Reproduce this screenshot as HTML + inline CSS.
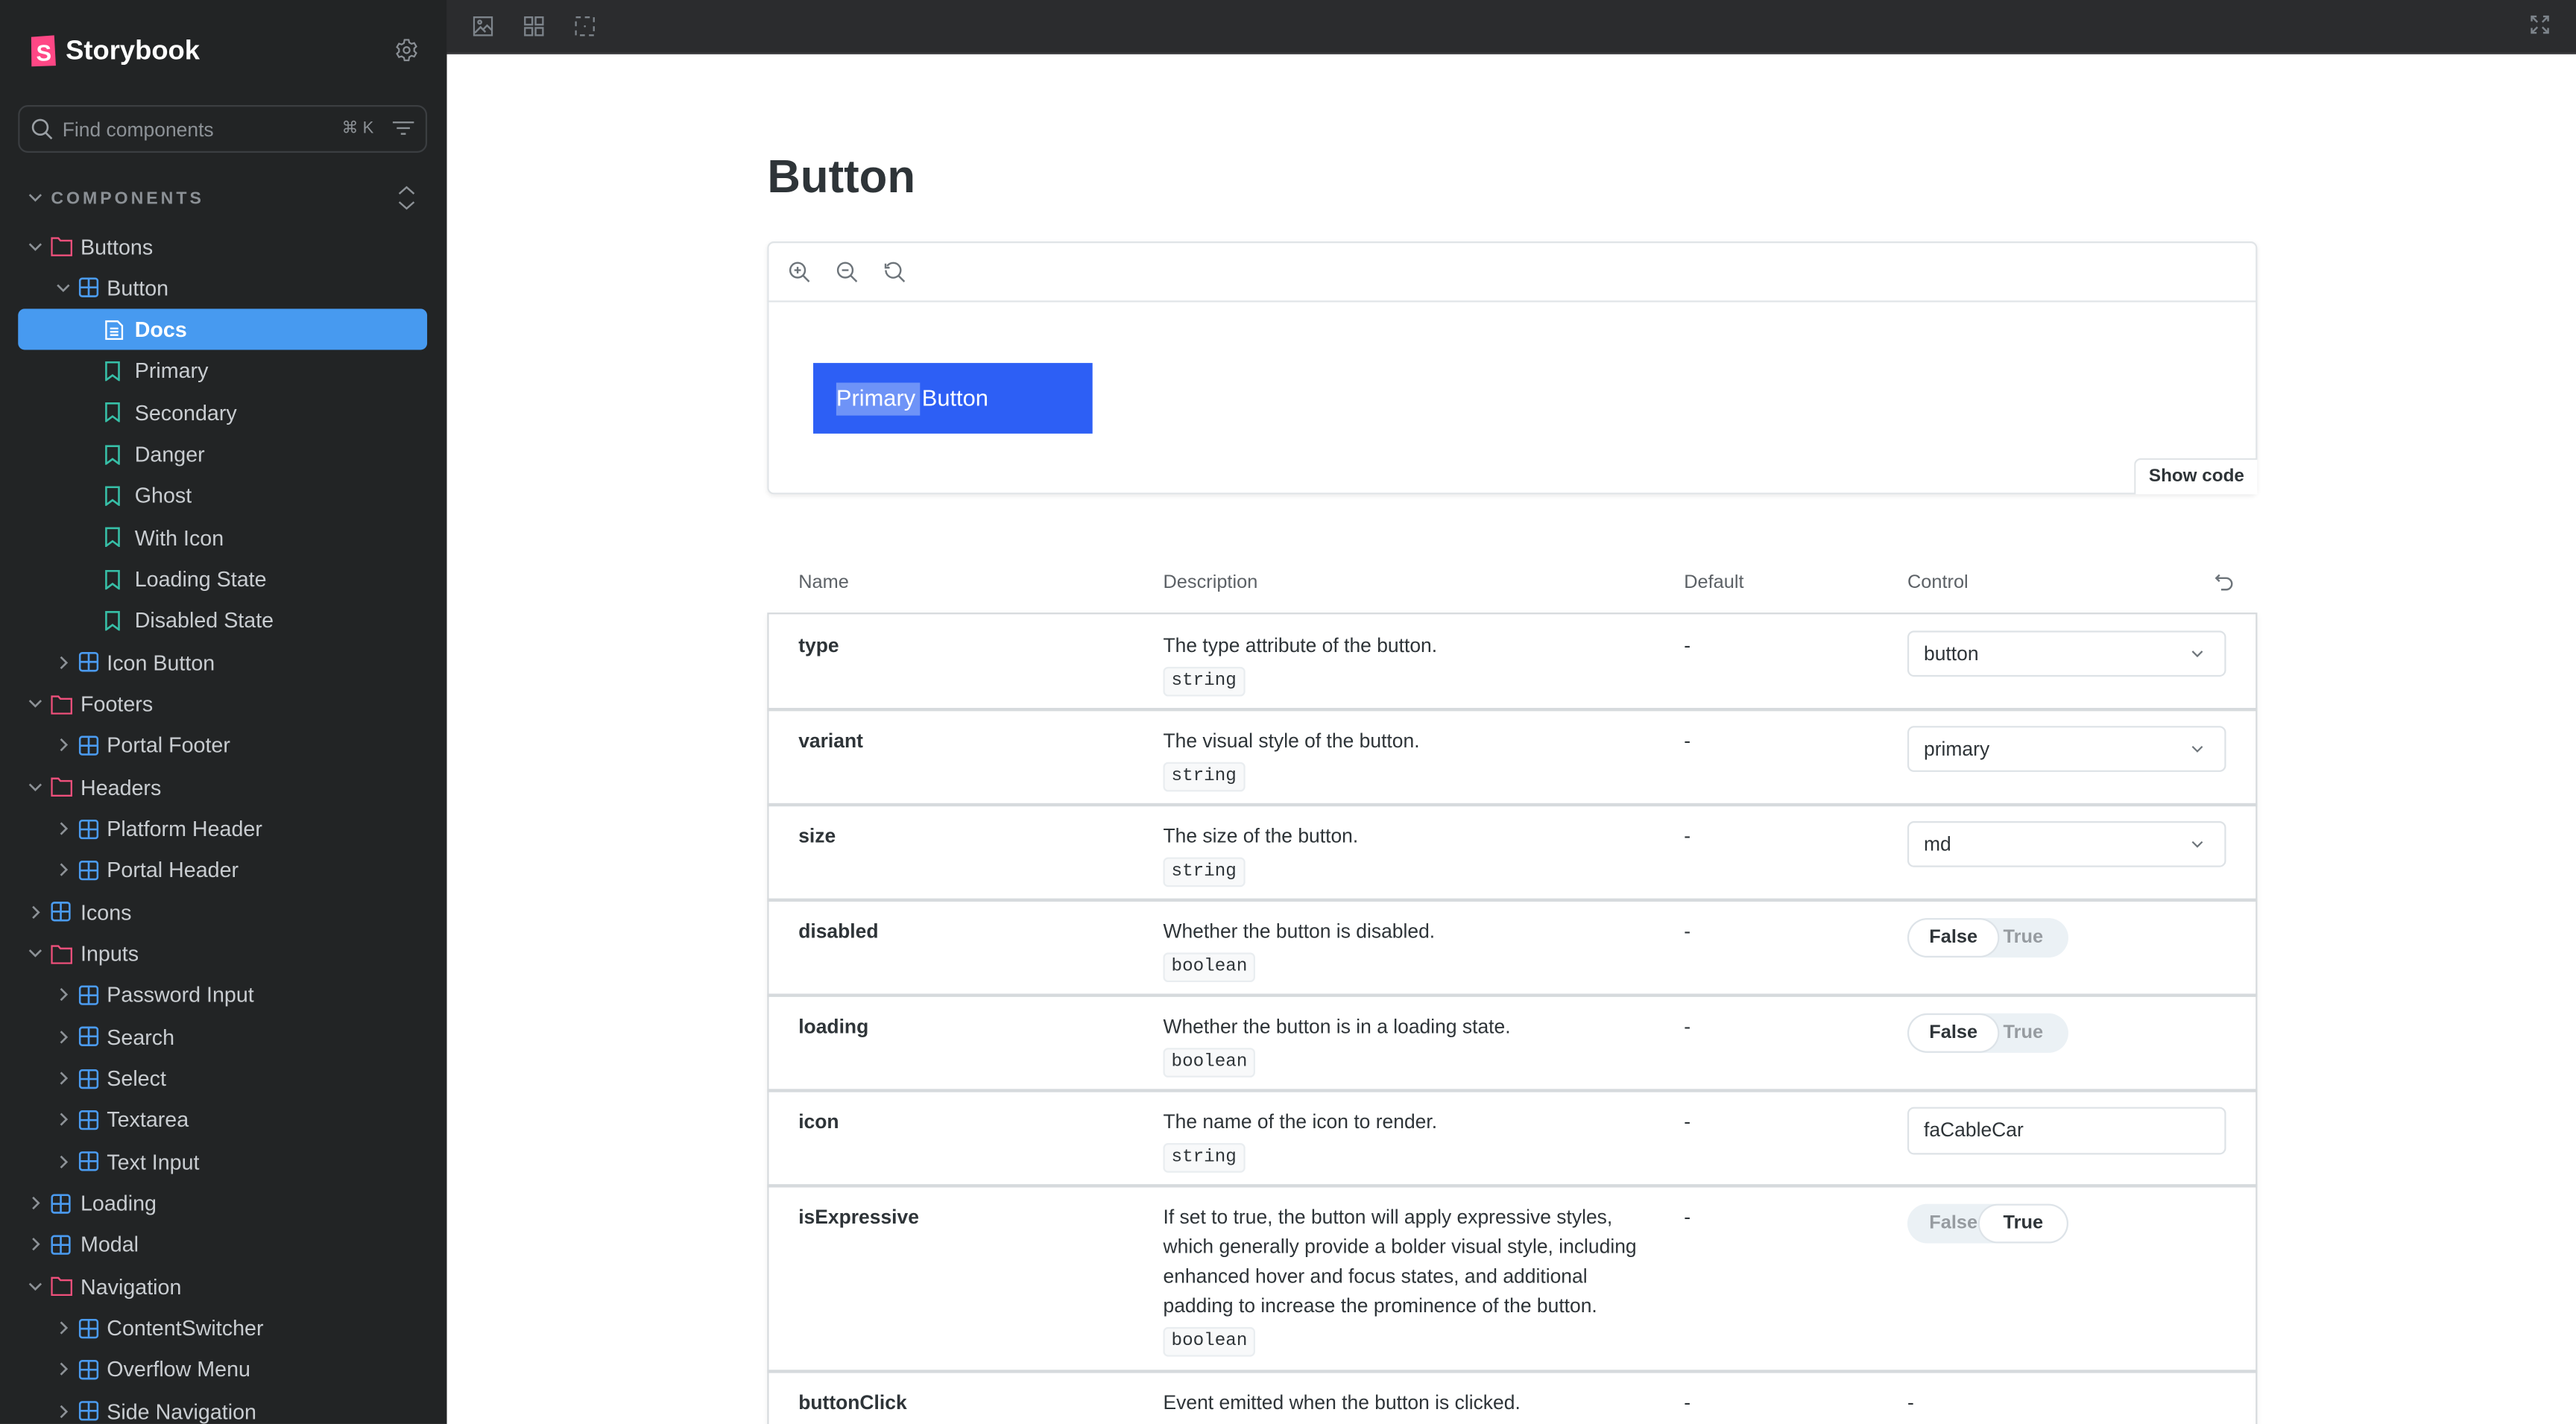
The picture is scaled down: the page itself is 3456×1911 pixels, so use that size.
<!DOCTYPE html>
<html><head><meta charset="utf-8"><style>
*{box-sizing:border-box;margin:0;padding:0}
html,body{width:3456px;height:1910px;overflow:hidden;background:#fff}
#s{position:absolute;left:0;top:0;width:1568px;height:867px;transform:scale(2.2041);transform-origin:0 0;font-family:"Liberation Sans",sans-serif;overflow:hidden}
.a{position:absolute}
#side{left:0;top:0;width:272px;height:867px;background:#222425}
.row{position:absolute;left:0;width:272px;height:25px;color:#c9cdd1;font-size:13px;line-height:25px;white-space:nowrap}
.row svg{position:absolute;top:6.5px}
.sel{left:11px;width:249px;background:#479af0;border-radius:4px}
#top{left:272px;top:0;width:1296px;height:33px;background:#2b2c2e;border-bottom:1px solid #3a3b3d}
.th{font-size:11.5px;color:#5c6166}
.cell{font-size:12px;color:#2e3438}
.code{display:inline-block;font-family:"Liberation Mono",monospace;font-size:11px;color:#2e3438;background:#f8f9fa;border:1px solid #e9edf0;border-radius:3px;padding:1px 4px;line-height:14px}
.hr{position:absolute;left:467px;width:907px;height:1.5px;background:#d6dadd}
.selbox{position:absolute;left:1161px;width:194px;height:28px;border:1px solid #dde2e6;border-radius:4px;font-size:12px;color:#2e3438;padding-left:9px;line-height:26px;background:#fff}
.tog{position:absolute;left:1161px;width:98px;height:24px;background:#ebf1f5;border-radius:12px;font-size:11.5px;font-weight:bold}
.tog span{position:absolute;top:1px;height:22px;line-height:22px;width:54px;text-align:center;border-radius:11px}
</style></head><body><div id="s">
<div id="side" class="a">
 <svg class="a" style="left:18px;top:21px" width="17" height="20" viewBox="0 0 17 20"><path d="M1 1.5 L15 .5 L16 19 L1.2 19.5Z" fill="#ff4785"/><text x="4" y="16" font-family="Liberation Sans" font-weight="bold" font-size="14" fill="#fff">S</text></svg>
 <div class="a" style="left:40px;top:22px;font-size:16.5px;font-weight:bold;color:#fff">Storybook</div>
 <svg class="a" style="left:240px;top:23px" width="15" height="15" viewBox="0 0 24 24" fill="none" stroke="#8b9096" stroke-width="1.6"><circle cx="12" cy="12" r="3"/><path d="M10 2h4l.6 2.6 2.2 1.3 2.6-.8 2 3.4-2 1.9v2.6l2 1.9-2 3.4-2.6-.8-2.2 1.3L14 22h-4l-.6-2.6-2.2-1.3-2.6.8-2-3.4 2-1.9v-2.6l-2-1.9 2-3.4 2.6.8 2.2-1.3Z"/></svg>
 <div class="a" style="left:11px;top:64px;width:249px;height:29px;border:1px solid #3b3e41;border-radius:6px"></div>
 <svg class="a" style="left:19px;top:72px" width="13" height="13" viewBox="0 0 13 13" fill="none" stroke="#9ba0a5" stroke-width="1.2"><circle cx="5.5" cy="5.5" r="4.5"/><path d="M9 9l3.5 3.5"/></svg>
 <div class="a" style="left:38px;top:72px;font-size:12px;color:#8d9297">Find components</div>
 <div class="a" style="left:208px;top:73px;font-size:10px;color:#8d9297">⌘ K</div>
 <svg class="a" style="left:239px;top:74px" width="13" height="10" viewBox="0 0 13 10" stroke="#8d9297" stroke-width="1.1"><path d="M0 .5h13M2.5 4h8M5 7.5h3"/></svg>
 <svg class="a" style="left:17px;top:117px" width="9" height="7" viewBox="0 0 9 7" fill="none" stroke="#8d9297" stroke-width="1.2"><path d="M1 1.5l3.5 3.5 3.5-3.5"/></svg>
 <div class="a" style="left:31px;top:115px;font-size:10.5px;font-weight:bold;letter-spacing:1.8px;color:#8b9095">COMPONENTS</div>
 <svg class="a" style="left:242px;top:113px" width="11" height="15" viewBox="0 0 11 15" fill="none" stroke="#8d9297" stroke-width="1.1"><path d="M1 5l4.5-4 4.5 4M1 10l4.5 4 4.5-4"/></svg>
 <div id="tree"></div>
</div>
<div id="top" class="a">
 <svg class="a" style="left:16px;top:10px" width="12" height="12" viewBox="0 0 12 12" fill="none" stroke="#7d848b" stroke-width="1.1"><rect x=".5" y=".5" width="11" height="11"/><path d="M1 10l3.5-3.5 3 3M6 8l2.5-2.5 3 3"/><circle cx="4" cy="3.5" r="1"/></svg>
 <svg class="a" style="left:47px;top:10px" width="12" height="12" viewBox="0 0 12 12" fill="none" stroke="#7d848b" stroke-width="1.1"><rect x=".5" y=".5" width="4.5" height="4.5"/><rect x="7" y=".5" width="4.5" height="4.5"/><rect x=".5" y="7" width="4.5" height="4.5"/><rect x="7" y="7" width="4.5" height="4.5"/></svg>
 <svg class="a" style="left:78px;top:10px" width="12" height="12" viewBox="0 0 12 12" fill="none" stroke="#7d848b" stroke-width="1.1" stroke-dasharray="3 2.5"><rect x=".5" y=".5" width="11" height="11"/><circle cx="6" cy="6" r=".6" fill="#7d848b" stroke="none"/></svg>
 <svg class="a" style="left:1268px;top:9px" width="12" height="12" viewBox="0 0 12 12" fill="none" stroke="#7d848b" stroke-width="1.1"><path d="M1 4V1h3M8 1h3v3M11 8v3H8M4 11H1V8M1 1l3.5 3.5M11 1 7.5 4.5M11 11 7.5 7.5M1 11l3.5-3.5"/></svg>
</div>
<div class="a" style="left:467px;top:92px;font-size:28px;font-weight:bold;color:#2e3438">Button</div>
<div class="a" style="left:467px;top:147px;width:907px;height:154px;border:1px solid #e0e4e7;border-radius:4px;box-shadow:0 1px 3px rgba(0,0,0,.08)"></div>
<div class="a" style="left:467px;top:183px;width:907px;height:1px;background:#e0e4e7"></div>
<svg class="a" style="left:480px;top:159px" width="75" height="14" viewBox="0 0 75 14" fill="none" stroke="#6d747a" stroke-width="1.1"><circle cx="5.5" cy="5.5" r="4.5"/><path d="M9 9l3.5 3.5M3.5 5.5h4M5.5 3.5v4"/><circle cx="34.5" cy="5.5" r="4.5"/><path d="M38 9l3.5 3.5M32.5 5.5h4"/><path d="M60 3a4.5 4.5 0 1 1 -.8 2.5M59 1.5v2.5h2.5M67 9l3.5 3.5"/></svg>
<div class="a" style="left:495px;top:221px;width:170px;height:43px;background:#2d5ff5"></div>
<div class="a" style="left:509px;top:233px;width:51px;height:20px;background:#6e93f7"></div>
<div class="a" style="left:509px;top:234px;font-size:14px;color:#fff">Primary Button</div>
<div class="a" style="left:1299px;top:279px;width:75px;height:22px;border:1px solid #e0e4e7;border-bottom:none;border-right:none;border-radius:4px 0 0 0;background:#fff;font-size:11px;font-weight:bold;color:#2e3438;text-align:center;line-height:21px">Show code</div>
<div class="a th" style="left:486px;top:349px">Name</div>
<div class="a th" style="left:708px;top:349px">Description</div>
<div class="a th" style="left:1025px;top:349px">Default</div>
<div class="a th" style="left:1161px;top:349px">Control</div>
<svg class="a" style="left:1348px;top:349px" width="12" height="11" viewBox="0 0 12 11" fill="none" stroke="#6d747a" stroke-width="1.1"><path d="M3 1L1 3l2 2M1 3h6a3.5 3.5 0 0 1 0 7H4"/></svg>
<div class="a" style="left:467px;top:373px;width:907px;height:500px;border:1px solid #d6dadd;border-top:1.5px solid #d6dadd;box-shadow:0 1px 4px rgba(0,0,0,.06)"></div>
<div id="rows"></div>
</div>
<script>
var C='#4b9bf0',F='#f0507c',T='#37bfa7';
function chev(d,x){return d=='d'?'<svg style="left:'+x+'px;top:9px" width="9" height="7" viewBox="0 0 9 7" fill="none" stroke="#8d9297" stroke-width="1.2"><path d="M1 1.5l3.5 3.5 3.5-3.5"/></svg>':'<svg style="left:'+(x+2)+'px;top:8px" width="6" height="9" viewBox="0 0 6 9" fill="none" stroke="#8d9297" stroke-width="1.2"><path d="M1 1l3.5 3.5L1 8"/></svg>';}
function ic(t,x){
 if(t=='f')return '<svg style="left:'+x+'px" width="13" height="12" viewBox="0 0 13 12" fill="none" stroke="'+F+'" stroke-width="1.1"><path d="M.5 1h4l1.3 1.5h6.7v9H.5Z"/></svg>';
 if(t=='c')return '<svg style="left:'+x+'px" width="12" height="12" viewBox="0 0 12 12" fill="none" stroke="'+C+'" stroke-width="1.2"><rect x=".6" y=".6" width="10.8" height="10.8" rx="1.5"/><path d="M6 .6v10.8M.6 6h10.8"/></svg>';
 if(t=='d')return '<svg style="left:'+x+'px" width="11" height="12" viewBox="0 0 11 12" fill="none" stroke="#fff" stroke-width="1.1"><path d="M.6.6h7l2.8 2.8v8H.6Z M3 5h5M3 7h5M3 9h5"/></svg>';
 return '<svg style="left:'+x+'px" width="9" height="12" viewBox="0 0 9 12" fill="none" stroke="'+T+'" stroke-width="1.2"><path d="M.6.6h7.8v10.8L4.5 8.5.6 11.4Z"/></svg>';}
var L=[[0,'f','Buttons','d'],[1,'c','Button','d'],[2,'d','Docs'],[2,'s','Primary'],[2,'s','Secondary'],[2,'s','Danger'],[2,'s','Ghost'],[2,'s','With Icon'],[2,'s','Loading State'],[2,'s','Disabled State'],[1,'c','Icon Button','r'],[0,'f','Footers','d'],[1,'c','Portal Footer','r'],[0,'f','Headers','d'],[1,'c','Platform Header','r'],[1,'c','Portal Header','r'],[0,'c','Icons','r'],[0,'f','Inputs','d'],[1,'c','Password Input','r'],[1,'c','Search','r'],[1,'c','Select','r'],[1,'c','Textarea','r'],[1,'c','Text Input','r'],[0,'c','Loading','r'],[0,'c','Modal','r'],[0,'f','Navigation','d'],[1,'c','ContentSwitcher','r'],[1,'c','Overflow Menu','r'],[1,'c','Side Navigation','r']];
var h='';L.forEach(function(r,i){var top=137.5+i*25.33,sel=r[2]=='Docs',o=sel?-11:0;
 var ix=[31,48,64][r[0]],tx=[49,65,82][r[0]];
 h+='<div class="row'+(sel?' sel':'')+'" style="top:'+top+'px'+(sel?';color:#fff;font-weight:bold':'')+'">';
 if(r[3])h+=chev(r[3],[17,34][r[0]]+o);
 h+=ic(r[1],ix+o);
 h+='<span style="position:absolute;left:'+(tx+o)+'px">'+r[2]+'</span></div>';});
document.getElementById('tree').innerHTML=h;
var R=[['type','The type attribute of the button.','string','sel','button',374],['variant','The visual style of the button.','string','sel','primary',432],['size','The size of the button.','string','sel','md',490],['disabled','Whether the button is disabled.','boolean','tf','F',548],['loading','Whether the button is in a loading state.','boolean','tf','F',606],['icon','The name of the icon to render.','string','ta','faCableCar',664],['isExpressive','If set to true, the button will apply expressive styles,<br>which generally provide a bolder visual style, including<br>enhanced hover and focus states, and additional<br>padding to increase the prominence of the button.','boolean','tf','T',722],['buttonClick','Event emitted when the button is clicked.','','none','',835]];
var g='';R.forEach(function(r){var y=r[5];
 if(y>374)g+='<div class="hr" style="top:'+(y-1)+'px"></div>';
 g+='<div class="a cell" style="left:486px;top:'+(y+12)+'px;font-weight:bold">'+r[0]+'</div>';
 g+='<div class="a cell" style="left:708px;top:'+(y+10)+'px;line-height:18px;width:300px">'+r[1]+(r[2]?'<div style="margin-top:2px"><span class="code">'+r[2]+'</span></div>':'')+'</div>';
 g+='<div class="a cell" style="left:1025px;top:'+(y+12)+'px">-</div>';
 if(r[3]=='sel')g+='<div class="selbox" style="top:'+(y+10)+'px">'+r[4]+'<svg style="position:absolute;right:13px;top:11px" width="7" height="5" viewBox="0 0 7 5" fill="none" stroke="#6d747a"><path d="M.5.5l3 3 3-3"/></svg></div>';
 if(r[3]=='ta')g+='<div class="selbox" style="top:'+(y+10)+'px;height:29px;line-height:27px">'+r[4]+'</div>';
 if(r[3]=='tf'){var f=r[4]=='F';g+='<div class="tog" style="top:'+(y+11)+'px"><span style="left:1px;'+(f?'background:#fff;color:#2e3438;box-shadow:0 0 0 1px #dde3e8':'color:#969ba0')+'">False</span><span style="left:44px;width:53px;'+(!f?'background:#fff;color:#2e3438;box-shadow:0 0 0 1px #dde3e8':'color:#969ba0')+'">True</span></div>';}
 if(r[3]=='none')g+='<div class="a cell" style="left:1161px;top:'+(y+12)+'px">-</div>';
});
document.getElementById('rows').innerHTML=g;
</script>
</body></html>
